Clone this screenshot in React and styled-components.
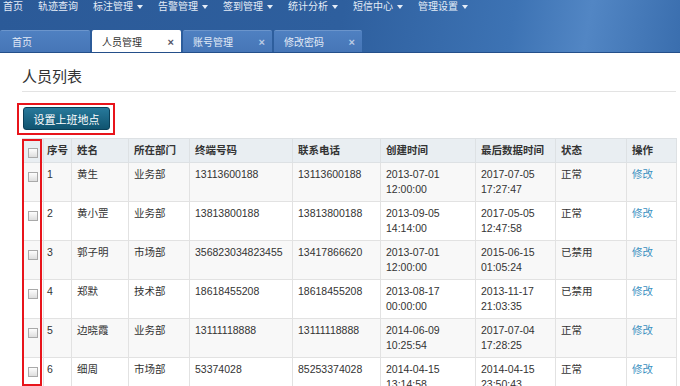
import React from "react";
import styled, { createGlobalStyle } from "styled-components";

const Global = createGlobalStyle`
  html, body { margin: 0; padding: 0; background: #fff; }
  body {
    font-family: "Liberation Sans", Arial, "Noto Sans CJK SC", sans-serif;
    color: #333;
    overflow: hidden;
  }
`;

const Header = styled.header`
  height: 53px;
  background: linear-gradient(100deg, #2b5a98 0%, #2e5f9e 50%, #3d73b4 75%, #5286c4 86%, #3a6eae 100%);
  border-bottom: 1px solid #244f8a;
  box-sizing: border-box;
`;

const Nav = styled.nav`
  display: flex;
  gap: 15px;
  padding-left: 3px;
  height: 30px;
  align-items: flex-start;
`;

const NavItem = styled.span`
  display: flex;
  align-items: center;
  font-size: 10px;
  line-height: 13px;
  color: #e4ecf7;
  white-space: nowrap;
`;

const Caret = styled.i`
  display: inline-block;
  margin-left: 4px;
  width: 0;
  height: 0;
  border-left: 3.5px solid transparent;
  border-right: 3.5px solid transparent;
  border-top: 4px solid #e4ecf7;
`;

const Tabs = styled.div`
  display: flex;
  gap: 2px;
  height: 22px;
`;

const Tab = styled.div`
  width: ${(p) => p.$w}px;
  box-sizing: border-box;
  display: flex;
  align-items: center;
  justify-content: space-between;
  padding: 0 7px 0 ${(p) => p.$pl}px;
  font-size: 10px;
  border-radius: 2px 2px 0 0;
  background: ${(p) => (p.$active ? "#fff" : "linear-gradient(#4f80c1, #4676b7)")};
  color: ${(p) => (p.$active ? "#333" : "#e2eaf6")};
  border-top: 1px solid ${(p) => (p.$active ? "#fff" : "#6b95cc")};
`;

const Close = styled.span`
  font-size: 11px;
  font-weight: bold;
  color: ${(p) => (p.$active ? "#556" : "#b9cbe5")};
`;

const Content = styled.main`
  padding: 0 4px 0 22px;
`;

const Title = styled.h1`
  margin: 14px 0 0;
  padding-bottom: 4px;
  font-size: 15px;
  line-height: 20px;
  font-weight: normal;
  color: #333;
  border-bottom: 1px solid #e3e3e3;
`;

const ButtonWrap = styled.div`
  position: relative;
  display: inline-block;
  margin: 15px 0 0 1px;
  &::before {
    content: "";
    position: absolute;
    top: -4px;
    left: -6px;
    right: -5px;
    bottom: -5px;
    border: 2px solid #e8141b;
  }
`;

const Button = styled.button`
  display: block;
  width: 87px;
  height: 23px;
  padding: 0;
  border: 1px solid #0b3f58;
  border-radius: 3px;
  background: linear-gradient(#27799b, #105470);
  color: #fff;
  font-family: inherit;
  font-size: 11px;
`;

const TableWrap = styled.div`
  position: relative;
  margin-top: 8px;
`;

const Marker = styled.div`
  position: absolute;
  left: 0;
  top: 1px;
  width: 20px;
  height: 247px;
  border: 2px solid #e8141b;
  box-sizing: border-box;
  pointer-events: none;
`;

const Table = styled.table`
  width: 654px;
  border-collapse: collapse;
  table-layout: fixed;
  font-size: 10.5px;
  border: 1px solid #ddd;
`;

const Th = styled.th`
  background: #e9eef2;
  border: 1px solid #dde1e4;
  padding: 4px 2px 4px ${(p) => (p.$pl ?? 5)}px;
  line-height: 15px;
  text-align: left;
  font-weight: bold;
  color: #333;
  vertical-align: top;
  white-space: nowrap;
`;

const Row = styled.tr`
  background: ${(p) => (p.$odd ? "#f8f8f8" : "#fff")};
`;

const Td = styled.td`
  border: 1px solid #e2e2e2;
  padding: 4px 2px 4px ${(p) => (p.$pl ?? 5)}px;
  line-height: 15px;
  vertical-align: top;
  height: 30px;
  color: #333;
  white-space: nowrap;
`;

const CheckCell = styled.td`
  border: 1px solid #e2e2e2;
  padding: 0;
  vertical-align: top;
  text-align: center;
`;

const CheckHead = styled.th`
  background: #e9eef2;
  border: 1px solid #dde1e4;
  padding: 0;
  vertical-align: top;
  text-align: center;
`;

const Box = styled.span`
  display: inline-block;
  width: 10px;
  height: 10px;
  margin-top: ${(p) => (p.$head ? 9 : 9)}px;
  box-sizing: border-box;
  border: 1px solid #a9a9a9;
  background: linear-gradient(#fdfdfd, #dedede);
`;

const Line = styled.span`
  display: block;
`;

const Link = styled.a`
  color: #3a8fbf;
  text-decoration: none;
`;

const cols = [21, 28, 57, 61, 103, 88, 95, 80, 71, 50];

const rows = [
  ["1", "黄生", "业务部", "13113600188", "13113600188", "2013-07-01", "12:00:00", "2017-07-05", "17:27:47", "正常"],
  ["2", "黄小罡", "业务部", "13813800188", "13813800188", "2013-09-05", "14:14:00", "2017-05-05", "12:47:58", "正常"],
  ["3", "郭子明", "市场部", "356823034823455", "13417866620", "2013-07-01", "12:00:00", "2015-06-15", "01:05:24", "已禁用"],
  ["4", "郑默", "技术部", "18618455208", "18618455208", "2013-08-17", "00:00:00", "2013-11-17", "21:03:35", "已禁用"],
  ["5", "边晓霞", "业务部", "13111118888", "13111118888", "2014-06-09", "10:25:54", "2017-07-04", "17:28:25", "正常"],
  ["6", "细周", "市场部", "53374028", "85253374028", "2014-04-15", "13:14:58", "2014-04-15", "23:50:43", "正常"],
];

const navs = [
  ["首页", false],
  ["轨迹查询", false],
  ["标注管理", true],
  ["告警管理", true],
  ["签到管理", true],
  ["统计分析", true],
  ["短信中心", true],
  ["管理设置", true],
];

const tabs = [
  { t: "首页", w: 90, pl: 12 },
  { t: "人员管理", w: 89, pl: 10, active: true, close: true },
  { t: "账号管理", w: 89, pl: 10, close: true },
  { t: "修改密码", w: 88, pl: 10, close: true },
];

export default function App() {
  return (
    <>
      <Global />
      <Header>
        <Nav>
          {navs.map(([n, c]) => (
            <NavItem key={n}>
              {n}
              {c && <Caret />}
            </NavItem>
          ))}
        </Nav>
        <Tabs>
          {tabs.map((t) => (
            <Tab key={t.t} $w={t.w} $pl={t.pl} $active={t.active}>
              <span>{t.t}</span>
              {t.close && <Close $active={t.active}>×</Close>}
            </Tab>
          ))}
        </Tabs>
      </Header>
      <Content>
        <Title>人员列表</Title>
        <ButtonWrap>
          <Button>设置上班地点</Button>
        </ButtonWrap>
        <TableWrap>
          <Table>
            <colgroup>
              {cols.map((w, i) => (
                <col key={i} style={{ width: w }} />
              ))}
            </colgroup>
            <thead>
              <tr>
                <CheckHead>
                  <Box $head />
                </CheckHead>
                <Th $pl={3}>序号</Th>
                <Th>姓名</Th>
                <Th>所在部门</Th>
                <Th>终端号码</Th>
                <Th>联系电话</Th>
                <Th>创建时间</Th>
                <Th>最后数据时间</Th>
                <Th>状态</Th>
                <Th>操作</Th>
              </tr>
            </thead>
            <tbody>
              {rows.map((r, i) => (
                <Row key={r[0]} $odd={i % 2 === 0}>
                  <CheckCell>
                    <Box />
                  </CheckCell>
                  <Td $pl={3}>{r[0]}</Td>
                  <Td>{r[1]}</Td>
                  <Td>{r[2]}</Td>
                  <Td>{r[3]}</Td>
                  <Td>{r[4]}</Td>
                  <Td>
                    <Line>{r[5]}</Line>
                    <Line>{r[6]}</Line>
                  </Td>
                  <Td>
                    <Line>{r[7]}</Line>
                    <Line>{r[8]}</Line>
                  </Td>
                  <Td>{r[9]}</Td>
                  <Td>
                    <Link href="#">修改</Link>
                  </Td>
                </Row>
              ))}
            </tbody>
          </Table>
          <Marker />
        </TableWrap>
      </Content>
    </>
  );
}
